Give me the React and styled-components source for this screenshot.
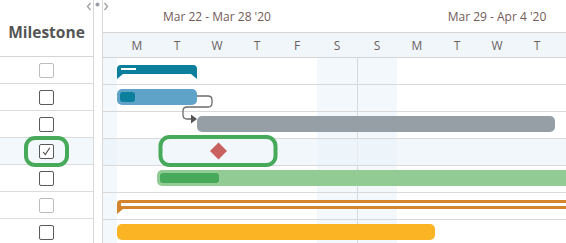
import styled, { createGlobalStyle } from "styled-components";

const GlobalStyle = createGlobalStyle`
  body {
    margin: 0;
    font-family: "Open Sans", "Liberation Sans", sans-serif;
    background: #fff;
    overflow: hidden;
  }
`;

const DAY = 40;
const ROW = 27;

const Page = styled.div`
  display: flex;
  width: 566px;
  height: 243px;
  overflow: hidden;
  background: #fff;
`;

const LeftPanel = styled.div`
  width: 93px;
  flex: none;
  border-right: 1px solid #d8d8d8;
`;

const ColumnHeader = styled.div`
  height: 57px;
  box-sizing: border-box;
  border-bottom: 1px solid #d4d4d4;
  display: flex;
  align-items: center;
  justify-content: center;
  padding-top: 8px;
  font-size: 15.5px;
  font-weight: 700;
  color: #555;
`;

const GridRow = styled.div`
  height: ${ROW - 1}px;
  border-bottom: 1px solid #dcdcdc;
  display: flex;
  align-items: center;
  justify-content: center;
  background: ${(p) => (p.$selected ? "#f3f8fc" : "transparent")};
`;

// green callout ring drawn round a cell's content
const Ring = styled.div`
  display: flex;
  align-items: center;
  justify-content: center;
  box-sizing: border-box;
  width: ${(p) => p.$w}px;
  height: ${(p) => p.$h}px;
  flex: none;
  border: 4px solid ${(p) => (p.$on ? "#47a95a" : "transparent")};
  border-radius: 11px;
`;

const Check = styled.div`
  width: 13px;
  height: 13px;
  border: 1px solid ${(p) => (p.$disabled ? "#bdbdbd" : "#5a5a5a")};
  border-radius: 2px;
  background: #fff;
  display: flex;
  align-items: center;
  justify-content: center;
`;

const Splitter = styled.div`
  position: relative;
  width: 8px;
  flex: none;
  border-right: 1px solid #d8d8d8;
`;

// collapse / expand handles sit over the top of the splitter
const SplitHandles = styled.div`
  position: absolute;
  top: 2px;
  left: -8px;
  display: flex;
  align-items: flex-start;
  gap: 3px;
`;

const Gantt = styled.div`
  flex: 1;
  overflow: hidden;
`;

const Timeline = styled.div`
  width: ${DAY * 14}px;
  margin-left: -26px;
`;

const WeekRow = styled.div`
  display: flex;
  height: 32px;
  border-bottom: 1px solid #d4d4d4;
`;

const WeekCell = styled.div`
  width: ${DAY * 7}px;
  flex: none;
  display: flex;
  align-items: center;
  justify-content: center;
  font-size: 12px;
  color: #735a58;
  padding-top: 1px;
`;

const DayRow = styled.div`
  display: flex;
  height: 24px;
  border-bottom: 1px solid #d4d4d4;
  background: #f0f6fa;
`;

const DayCell = styled.div`
  width: ${DAY}px;
  flex: none;
  display: flex;
  align-items: center;
  justify-content: center;
  font-size: 12px;
  color: #6a6262;
`;

const Body = styled.div`
  position: relative;
  background-image: repeating-linear-gradient(
    to right,
    #d9d9d9 0 1px,
    #f2f8fb 1px ${DAY}px,
    transparent ${DAY}px ${DAY * 6}px,
    #f2f8fb ${DAY * 6}px ${DAY * 7}px
  );
`;

const TimeRow = styled.div`
  position: relative;
  height: ${ROW - 1}px;
  border-bottom: 1px solid #d9d9d9;
  background: ${(p) => (p.$selected ? "rgba(236, 244, 250, 0.7)" : "transparent")};
`;

const TaskBar = styled.div`
  position: absolute;
  top: 4px;
  left: ${(p) => p.$left}px;
  width: ${(p) => p.$width}px;
  height: 16px;
  border-radius: 5px;
  background: ${(p) => p.$color};
  display: flex;
  align-items: center;
  padding-left: 3px;
  box-sizing: border-box;
`;

const Progress = styled.div`
  width: ${(p) => p.$width}px;
  height: 10px;
  border-radius: 3px;
  background: ${(p) => p.$color};
`;

const SummaryBar = styled.div`
  position: absolute;
  top: 7px;
  left: ${(p) => p.$left}px;
  width: ${(p) => p.$width}px;
  height: 9px;
  box-sizing: border-box;
  padding: 3px 0 0 4px;
  border-radius: 4px 4px 0 0;
  background: ${(p) => p.$color};

  &::before,
  &::after {
    content: "";
    position: absolute;
    top: 100%;
    width: 0;
    height: 0;
    border-bottom: 5px solid transparent;
  }
  &::before {
    left: 0;
    border-left: 6px solid ${(p) => p.$color};
  }
  &::after {
    right: 0;
    border-right: 6px solid ${(p) => p.$color};
  }
`;

const SummaryStripe = styled.div`
  width: ${(p) => p.$width}px;
  height: ${(p) => p.$height}px;
  background: #fff;
`;

// milestone sits on its date; the callout ring is centred on it
const MilestoneSlot = styled.div`
  position: absolute;
  top: 50%;
  left: ${(p) => p.$center}px;
  transform: translate(-50%, -50%);
  margin-left: 1px;
  margin-top: -1px;
`;

const Diamond = styled.div`
  width: 12px;
  height: 12px;
  background: #c9625f;
  transform: rotate(45deg);
`;

const Links = styled.svg`
  position: absolute;
  left: 0;
  top: 0;
  overflow: visible;
  pointer-events: none;
`;

const milestones = [
  { disabled: true },
  {},
  {},
  { checked: true, selected: true },
  {},
  { disabled: true },
  {},
];

const weeks = ["Mar 22 - Mar 28 '20", "Mar 29 - Apr 4 '20"];
// first Sunday column is scrolled out of view
const days = ["", "M", "T", "W", "T", "F", "S", "S", "M", "T", "W", "T"];

function CheckMark() {
  return (
    <svg width="11" height="11" viewBox="0 0 11 11">
      <path d="M2.2 6 L4.3 8.6 L8.8 1.8" fill="none" stroke="#4a4a4a" strokeWidth="1.1" />
    </svg>
  );
}

function Chevron({ flip }) {
  return (
    <svg width="6" height="9" viewBox="0 0 6 9">
      <path
        d={flip ? "M1.5 1 L4.5 4.5 L1.5 8" : "M4.5 1 L1.5 4.5 L4.5 8"}
        fill="none"
        stroke="#a3a3a3"
        strokeWidth="1.4"
      />
    </svg>
  );
}

function Dot() {
  return (
    <svg width="5" height="5" viewBox="0 0 5 5">
      <circle cx="2.5" cy="2.5" r="2" fill="#9a9ea6" />
    </svg>
  );
}

export default function App() {
  return (
    <>
      <GlobalStyle />
      <Page>
        <LeftPanel>
          <ColumnHeader>Milestone</ColumnHeader>
          {milestones.map((m, i) => (
            <GridRow key={i} $selected={m.selected}>
              <Ring $w={45} $h={31} $on={m.selected}>
                <Check $disabled={m.disabled}>{m.checked && <CheckMark />}</Check>
              </Ring>
            </GridRow>
          ))}
        </LeftPanel>

        <Splitter>
          <SplitHandles>
            <Chevron />
            <Dot />
            <Chevron flip />
          </SplitHandles>
        </Splitter>

        <Gantt>
          <Timeline>
            <WeekRow>
              {weeks.map((w) => (
                <WeekCell key={w}>{w}</WeekCell>
              ))}
            </WeekRow>
            <DayRow>
              {days.map((d, i) => (
                <DayCell key={i}>{d}</DayCell>
              ))}
            </DayRow>

            <Body>
              <TimeRow>
                <SummaryBar $left={40} $width={80} $color="#0b7f9c">
                  <SummaryStripe $width={15} $height={2} />
                </SummaryBar>
              </TimeRow>
              <TimeRow>
                <TaskBar $left={40} $width={80} $color="#5fa3c9">
                  <Progress $width={15} $color="#0b7f9c" />
                </TaskBar>
              </TimeRow>
              <TimeRow>
                <TaskBar $left={120} $width={358} $color="#979fa6" />
              </TimeRow>
              <TimeRow $selected>
                <MilestoneSlot $center={140}>
                  <Ring $w={119} $h={32} $on>
                    <Diamond />
                  </Ring>
                </MilestoneSlot>
              </TimeRow>
              <TimeRow>
                <TaskBar $left={80} $width={600} $color="#93cb94">
                  <Progress $width={59} $color="#47a95a" />
                </TaskBar>
              </TimeRow>
              <TimeRow>
                <SummaryBar $left={40} $width={600} $color="#d4842b">
                  <SummaryStripe $width={596} $height={3} />
                </SummaryBar>
              </TimeRow>
              <TimeRow>
                <TaskBar $left={40} $width={318} $color="#fbb524" />
              </TimeRow>

              <Links width="1" height="1">
                <path
                  d="M120 38 H131 Q135 38 135 42 V45 Q135 49 131 49 H110 Q106 49 106 53 V57 Q106 61 110 61 H115"
                  fill="none"
                  stroke="#6b6b6b"
                  strokeWidth="1.3"
                />
                <polygon points="114,56.5 120,61 114,65.5" fill="#555" />
              </Links>
            </Body>
          </Timeline>
        </Gantt>
      </Page>
    </>
  );
}
